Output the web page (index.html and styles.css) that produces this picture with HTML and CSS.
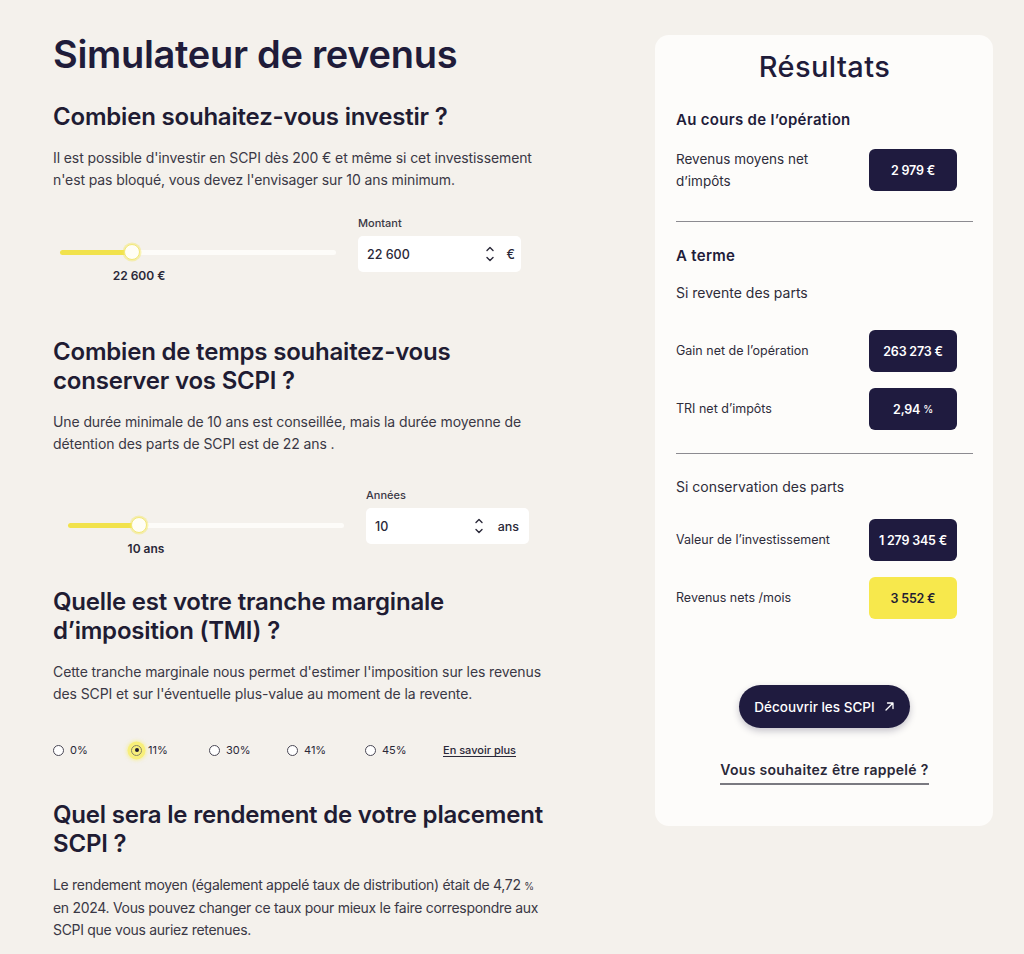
FILE: index.html
```html
<!DOCTYPE html>
<html lang="fr">
<head>
<meta charset="utf-8">
<title>Simulateur de revenus</title>
<link rel="stylesheet" href="styles.css">
</head>
<body>
<div class="page">
  <main class="sim">
    <h1 class="title">Simulateur de revenus</h1>

    <h2 class="q q1">Combien souhaitez-vous investir ?</h2>
    <p class="txt t1">Il est possible d'investir en SCPI dès 200 € et même si cet investissement<br>n'est pas bloqué, vous devez l'envisager sur 10 ans minimum.</p>
    <div class="slider-row row1">
      <div class="slider" style="--pos:72px">
        <div class="track"><div class="fill"></div><span class="thumb"></span></div>
        <div class="slider-value">22 600 €</div>
      </div>
      <div class="field">
        <span class="field-label">Montant</span>
        <div class="input">
          <span class="input-val">22 600</span>
          <svg class="spin" width="10" height="20" viewBox="0 0 10 20"><path d="M2 6.5 5 3.5 8 6.5M2 13.5 5 16.5 8 13.5" fill="none" stroke="#2a2838" stroke-width="1.4" stroke-linecap="round" stroke-linejoin="round"/></svg>
          <span class="unit">€</span>
        </div>
      </div>
    </div>

    <h2 class="q q2">Combien de temps souhaitez-vous<br>conserver vos SCPI ?</h2>
    <p class="txt t2">Une durée minimale de 10 ans est conseillée, mais la durée moyenne de<br>détention des parts de SCPI est de 22 ans .</p>
    <div class="slider-row row2">
      <div class="slider" style="--pos:71px">
        <div class="track"><div class="fill"></div><span class="thumb"></span></div>
        <div class="slider-value">10 ans</div>
      </div>
      <div class="field">
        <span class="field-label">Années</span>
        <div class="input">
          <span class="input-val">10</span>
          <svg class="spin" width="10" height="20" viewBox="0 0 10 20"><path d="M2 6.5 5 3.5 8 6.5M2 13.5 5 16.5 8 13.5" fill="none" stroke="#2a2838" stroke-width="1.4" stroke-linecap="round" stroke-linejoin="round"/></svg>
          <span class="unit unit-ans">ans</span>
        </div>
      </div>
    </div>

    <h2 class="q q3">Quelle est votre tranche marginale<br>d’imposition (TMI) ?</h2>
    <p class="txt t3">Cette tranche marginale nous permet d'estimer l'imposition sur les revenus<br>des SCPI et sur l'éventuelle plus-value au moment de la revente.</p>
    <div class="radios">
      <span class="radio"><span class="dot"></span>0%</span>
      <span class="radio checked"><span class="dot"></span>11%</span>
      <span class="radio"><span class="dot"></span>30%</span>
      <span class="radio"><span class="dot"></span>41%</span>
      <span class="radio"><span class="dot"></span>45%</span>
      <a class="more" href="#">En savoir plus</a>
    </div>

    <h2 class="q q4">Quel sera le rendement de votre placement<br>SCPI ?</h2>
    <p class="txt t4">Le rendement moyen (également appelé taux de distribution) était de 4,72 <small>%</small><br>en 2024. Vous pouvez changer ce taux pour mieux le faire correspondre aux<br>SCPI que vous auriez retenues.</p>
  </main>

  <aside class="card">
    <h2 class="res-title">Résultats</h2>
    <h3 class="res-h h-op">Au cours de l’opération</h3>
    <div class="res-row r1">
      <span class="res-label big">Revenus moyens net<br>d’impôts</span>
      <span class="badge">2 979 €</span>
    </div>
    <hr class="sep s1">
    <h3 class="res-h h-term">A terme</h3>
    <div class="res-sub sub1">Si revente des parts</div>
    <div class="res-row r2">
      <span class="res-label">Gain net de l’opération</span>
      <span class="badge">263 273 €</span>
    </div>
    <div class="res-row r3">
      <span class="res-label">TRI net d’impôts</span>
      <span class="badge">2,94 <small>%</small></span>
    </div>
    <hr class="sep s2">
    <div class="res-sub sub2">Si conservation des parts</div>
    <div class="res-row r4">
      <span class="res-label">Valeur de l’investissement</span>
      <span class="badge">1 279 345 €</span>
    </div>
    <div class="res-row r5">
      <span class="res-label">Revenus nets /mois</span>
      <span class="badge yellow">3 552 €</span>
    </div>
    <div class="actions">
      <a class="btn" href="#">Découvrir les SCPI
        <svg width="11" height="11" viewBox="0 0 11 11"><path d="M2 9 9 2M3.5 2H9v5.5" fill="none" stroke="#fff" stroke-width="1.3" stroke-linecap="round" stroke-linejoin="round"/></svg>
      </a>
      <a class="callback" href="#">Vous souhaitez être rappelé ?</a>
    </div>
  </aside>
</div>
</body>
</html>
```

FILE: styles.css
```css
* { box-sizing: border-box; }

body {
  margin: 0;
  background: #f4f1ec;
  font-family: Inter, "Noto Sans", sans-serif;
  color: #1f1c3a;
}

.page {
  display: flex;
  align-items: flex-start;
  padding-left: 53px;
}

.sim {
  width: 510px;
  flex: none;
}

.title {
  margin: 0;
  padding-top: 31px;
  font-size: 38px;
  line-height: 46px;
  font-weight: 600;
  letter-spacing: -0.3px;
}

.q {
  margin: 0;
  font-size: 24px;
  line-height: 29px;
  font-weight: 600;
  letter-spacing: -0.2px;
  color: #1f1c33;
}

.txt {
  margin: 0;
  font-size: 14px;
  line-height: 22px;
  color: #3a3845;
  letter-spacing: -0.1px;
}

.txt small {
  font-size: 10px;
}

.t4 { letter-spacing: -0.3px; }

.q1 { margin-top: 25px; }
.t1 { margin-top: 16px; }
.row1 { margin-top: 24px; padding-left: 7px; }
.q2 { margin-top: 53px; }
.t2 { margin-top: 16px; }
.row2 { margin-top: 32px; padding-left: 15px; }
.row2 .slider { padding-top: 30px; }
.q3 { margin-top: 30px; }
.t3 { margin-top: 16px; }
.radios { margin-top: 35px; }
.q4 { margin-top: 40px; }
.t4 { margin-top: 16px; }

/* slider */
.slider-row {
  display: flex;
  align-items: flex-start;
  gap: 22px;
}

.slider {
  width: 276px;
  padding-top: 29px;
}

.track {
  position: relative;
  height: 16px;
  display: flex;
  align-items: center;
}

.track::before {
  content: "";
  position: absolute;
  left: 0;
  right: 0;
  top: 5.5px;
  height: 5px;
  border-radius: 3px;
  background: #fdfcf9;
}

.fill {
  position: relative;
  width: var(--pos);
  height: 5px;
  border-radius: 3px 0 0 3px;
  background: #f1e24c;
}

.thumb {
  position: absolute;
  top: 0;
  left: calc(var(--pos) - 8px);
  width: 16px;
  height: 16px;
  border-radius: 50%;
  background: #fffef6;
  border: 1.5px solid #f3e877;
  box-shadow: 0 0 0 1.5px rgba(243, 232, 100, 0.45);
}

.slider-value {
  margin-top: 8px;
  margin-left: calc(var(--pos) - 30px);
  width: 74px;
  text-align: center;
  font-size: 12px;
  line-height: 16px;
  font-weight: 600;
  color: #2a2838;
}

.field {
  display: flex;
  flex-direction: column;
  gap: 5px;
}

.field-label {
  font-size: 11px;
  line-height: 16px;
  color: #3a3845;
  font-weight: 500;
}

.input {
  width: 163px;
  height: 36px;
  background: #fff;
  border-radius: 5px;
  display: flex;
  align-items: center;
  padding: 0 6px 0 9px;
  font-size: 12.5px;
  font-weight: 500;
  color: #2a2838;
}

.input-val { flex: 1; }

.spin { margin-right: 12px; }

.unit-ans { margin-right: 4px; }
.row2 .spin { margin-right: 14px; }

/* radios */
.radios {
  display: flex;
  align-items: center;
  height: 20px;
  font-size: 11px;
  color: #2a2838;
}

.radio {
  width: 78px;
  display: flex;
  align-items: center;
  gap: 6px;
  flex: none;
}

.dot {
  width: 11px;
  height: 11px;
  border-radius: 50%;
  border: 1px solid #4a4855;
  background: #fff;
  flex: none;
}

.radio.checked .dot {
  position: relative;
  background: #f8ef7a;
  border-color: #8a8566;
  box-shadow: 0 0 0 3.5px #f8ef7a, 0 0 3px 5px rgba(248, 239, 122, 0.5);
}

.radio.checked .dot::after {
  content: "";
  position: absolute;
  left: 2.5px;
  top: 2.5px;
  width: 4px;
  height: 4px;
  border-radius: 50%;
  background: #1f1c33;
}

.more {
  color: #2a2838;
  font-size: 11px;
  font-weight: 500;
  text-decoration: underline;
  text-underline-offset: 2px;
}

/* card */
.card {
  margin-top: 35px;
  margin-left: 92px;
  width: 338px;
  flex: none;
  background: #fdfcfa;
  border-radius: 14px;
  padding: 15px 20px 41px 21px;
}

.res-title {
  margin: 0;
  text-align: center;
  font-size: 29px;
  line-height: 34px;
  font-weight: 500;
  letter-spacing: 0.4px;
}

.res-h {
  margin: 0;
  font-size: 15px;
  line-height: 20px;
  font-weight: 600;
  letter-spacing: 0.3px;
}

.h-op { margin-top: 26px; }
.h-term { margin-top: 24px; }

.res-sub {
  font-size: 14px;
  line-height: 20px;
  color: #2e2c3a;
}

.sub1 { margin-top: 17px; }
.sub2 { margin-top: 23px; }

.res-row {
  display: grid;
  grid-template-columns: 193px 88px;
  align-items: center;
}

.r1 { margin-top: 18px; }
.r2 { margin-top: 27px; }
.r3 { margin-top: 16px; }
.r4 { margin-top: 22px; }
.r5 { margin-top: 16px; }

.res-label {
  font-size: 12.5px;
  line-height: 20px;
  color: #2e2c3a;
}

.res-label.big {
  font-size: 13.5px;
  line-height: 22px;
}

.badge {
  height: 42px;
  border-radius: 6px;
  background: #1f1b3f;
  color: #fff;
  display: flex;
  align-items: center;
  justify-content: center;
  font-size: 12.5px;
  font-weight: 600;
  letter-spacing: -0.2px;
}

.badge small {
  font-size: 10px;
  font-weight: 500;
  margin-left: 3px;
}

.badge.yellow {
  background: #f7e84c;
  color: #1f1c33;
}

.sep {
  margin: 0;
  border: 0;
  height: 1px;
  background: #8c8b90;
}

.s1 { margin-top: 29px; }
.s2 { margin-top: 23px; }

.actions {
  display: flex;
  flex-direction: column;
  align-items: center;
}

.btn {
  margin-top: 66px;
  width: 171px;
  height: 43px;
  border-radius: 22px;
  background: #1f1b3f;
  color: #fff;
  display: flex;
  align-items: center;
  justify-content: center;
  gap: 9px;
  font-size: 13.5px;
  font-weight: 500;
  text-decoration: none;
  box-shadow: 0 3px 7px rgba(31, 27, 63, 0.25);
}

.callback {
  margin-top: 34px;
  font-size: 14px;
  line-height: 16px;
  font-weight: 600;
  color: #2a2838;
  text-decoration: none;
  padding-bottom: 5px;
  border-bottom: 2px solid #7a7980;
  letter-spacing: 0.3px;
}
```
